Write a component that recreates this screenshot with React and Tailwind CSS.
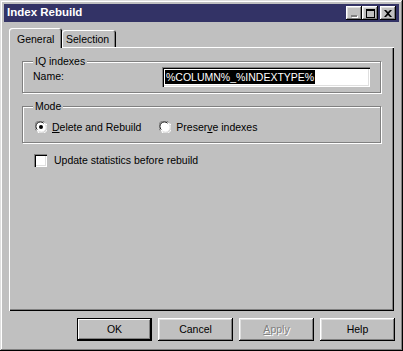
import React from 'react';

const raised =
  'shadow-[inset_-1px_-1px_0_#000,inset_1px_1px_0_#fff,inset_-2px_-2px_0_#808080,inset_2px_2px_0_#dfdfdf]';
const sunken =
  'shadow-[inset_1px_1px_0_#808080,inset_2px_2px_0_#000,inset_-1px_-1px_0_#fff,inset_-2px_-2px_0_#dfdfdf]';

function TitleButton({ children, className = '' }) {
  return (
    <div className={`w-[16px] h-[14px] bg-[#c0c0c0] flex items-center justify-center ${raised} ${className}`}>
      {children}
    </div>
  );
}

function Radio({ checked }) {
  return (
    <svg width="12" height="12" viewBox="0 0 12 12" className="shrink-0">
      <circle cx="6" cy="6" r="5.5" fill="#fff" />
      <path d="M1.2 9.5 A5.5 5.5 0 0 1 9.5 1.2" stroke="#808080" strokeWidth="1" fill="none" />
      <path d="M2.2 8.6 A4.5 4.5 0 0 1 8.6 2.2" stroke="#000" strokeWidth="1" fill="none" />
      <path d="M10.8 2.5 A5.5 5.5 0 0 1 2.5 10.8" stroke="#fff" strokeWidth="1" fill="none" />
      <path d="M9.8 3.4 A4.5 4.5 0 0 1 3.4 9.8" stroke="#dfdfdf" strokeWidth="1" fill="none" />
      {checked && <circle cx="6" cy="6" r="2" fill="#000" />}
    </svg>
  );
}

function Button({ children, isDefault, disabled }) {
  return (
    <div
      className={`w-[75px] h-[23px] bg-[#c0c0c0] flex items-center justify-center ${
        isDefault
          ? 'shadow-[inset_0_0_0_1px_#000,inset_-2px_-2px_0_#000,inset_2px_2px_0_#fff,inset_-3px_-3px_0_#808080]'
          : raised
      } ${disabled ? 'text-[#808080] [text-shadow:1px_1px_0_#fff]' : 'text-black'}`}
    >
      {children}
    </div>
  );
}

function GroupBox({ label, className = '', children }) {
  return (
    <div className={`relative w-[359px] border border-[#808080] shadow-[1px_1px_0_#fff,inset_1px_1px_0_#fff] ${className}`}>
      <span className="absolute left-[10px] top-[-8px] px-[2px] bg-[#c0c0c0] leading-[14px]">{label}</span>
      {children}
    </div>
  );
}

export default function App() {
  return (
    <div className="w-[403px] h-[351px] bg-[#c0c0c0] p-1 flex flex-col font-['Liberation_Sans',Arial,sans-serif] text-[10.5px] text-black shadow-[inset_-1px_-1px_0_#000,inset_1px_1px_0_#dfdfdf,inset_-2px_-2px_0_#808080,inset_2px_2px_0_#fff] select-none">
      {/* title bar */}
      <div className="h-[18px] bg-[#333366] flex items-center pl-[3px] pr-[3px]">
        <span className="text-white font-bold text-[11.5px] leading-none">Index Rebuild</span>
        <div className="ml-auto flex items-center">
          <TitleButton>
            <div className="w-[6px] h-[2px] bg-[#808080] mt-[6px] shadow-[1px_1px_0_#fff]" />
          </TitleButton>
          <TitleButton>
            <div className="w-[9px] h-[9px] border border-black border-t-2" />
          </TitleButton>
          <TitleButton className="ml-[2px]">
            <svg width="8" height="7" viewBox="0 0 8 7">
              <path d="M0 0h2l2 2 2-2h2L5 3.5 8 7H6L4 5 2 7H0l3-3.5z" fill="#000" />
            </svg>
          </TitleButton>
        </div>
      </div>

      {/* body */}
      <div className="flex-1 flex flex-col px-[5px] pt-[6px]">
        <div className="h-[19px] flex items-end">
          <div className="relative z-10 w-[53px] h-[20px] mb-[-1px] bg-[#c0c0c0] rounded-t-[3px] pl-[8px] pt-[4px] shadow-[inset_1px_1px_0_#fff,inset_-1px_0_0_#000,inset_-2px_0_0_#808080]">
            General
          </div>
          <div className="w-[54px] h-[17px] bg-[#c0c0c0] rounded-t-[3px] pl-[4px] pt-[2px] shadow-[inset_1px_1px_0_#fff,inset_-1px_0_0_#000,inset_-2px_0_0_#808080]">
            Selection
          </div>
        </div>

        <div className="h-[264px] flex flex-col pl-[13px] pt-[14px] shadow-[inset_1px_1px_0_#fff,inset_-1px_-1px_0_#000,inset_-2px_-2px_0_#808080]">
          <GroupBox label="IQ indexes" className="h-[32px] flex items-center pl-[10px] pr-[10px]">
            <span>Name:</span>
            <div className={`ml-auto w-[208px] h-[20px] bg-white flex items-center px-[3px] ${sunken}`}>
              <span className="bg-black text-white leading-[14px] px-[1px] whitespace-nowrap">%COLUMN%_%INDEXTYPE%</span>
            </div>
          </GroupBox>

          <GroupBox label="Mode" className="h-[37px] mt-[13px] flex items-start pt-[14px] pl-[12px]">
            <div className="flex items-center gap-[5px]">
              <Radio checked />
              <span className="leading-[12px]">
                <span className="underline">D</span>elete and Rebuild
              </span>
            </div>
            <div className="flex items-center gap-[5px] ml-[18px]">
              <Radio />
              <span className="leading-[12px]">
                Preser<span className="underline">v</span>e indexes
              </span>
            </div>
          </GroupBox>

          <div className="flex items-center gap-[7px] mt-[10px] pl-[12px]">
            <div className={`w-[13px] h-[13px] bg-white ${sunken}`} />
            <span>Update statistics before rebuild</span>
          </div>
        </div>

        <div className="flex justify-end gap-[6px] mt-[7px] mr-[-1px]">
          <Button isDefault>OK</Button>
          <Button>Cancel</Button>
          <Button disabled>
            <span>
              <span className="underline">A</span>pply
            </span>
          </Button>
          <Button>Help</Button>
        </div>
      </div>
    </div>
  );
}
